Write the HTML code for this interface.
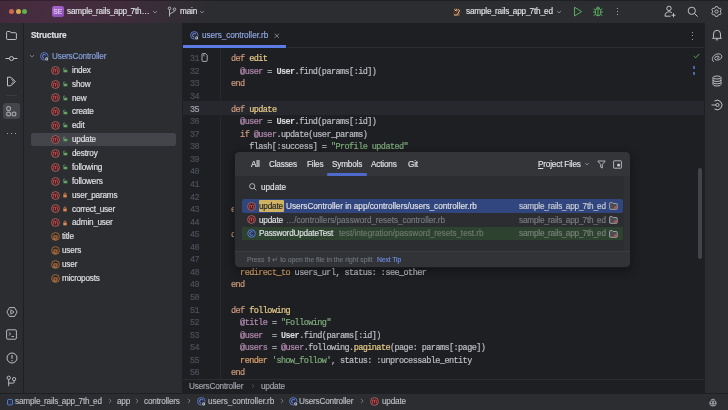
<!DOCTYPE html>
<html><head><meta charset="utf-8">
<style>
*{margin:0;padding:0;box-sizing:border-box}
html,body{width:728px;height:410px;overflow:hidden;background:#1E1F22}
body{position:relative;font-family:"Liberation Sans",sans-serif;font-size:8.2px;color:#DFE1E5}
.a{position:absolute;white-space:pre}
svg{position:absolute;overflow:visible;fill:none}
.c,.ln{position:absolute;white-space:pre;font-family:"Liberation Mono",monospace;font-size:8.5px;letter-spacing:-0.56px;color:#BCBEC4;line-height:12px;height:12px}
.ln{color:#53575F;text-align:right;width:30px}
.c,.ln{-webkit-text-stroke:0.2px currentColor;will-change:transform}
.t{-webkit-text-stroke:0.15px currentColor;will-change:transform}
.kw{color:#CE9A7C}
.rk{color:#D8A26C}
.fn{color:#E6CB88}
.iv{color:#B48BB2}
.cl{color:#D9DBE0;font-weight:bold;-webkit-text-stroke:0.05px currentColor}
.st{color:#7DAA7A}
</style></head><body>
<div class="a" style="left:0px;top:0px;width:728px;height:23px;background:#2B2D30;"></div>
<div class="a" style="left:0px;top:0px;width:728px;height:23px;background:linear-gradient(90deg,#432B3D 0px,#472D41 60px,#402C3C 120px,rgba(43,45,48,0) 215px);"></div>
<div class="a" style="left:0px;top:0px;width:728px;height:0.8px;background:rgba(0,0,0,0.25);"></div>
<div class="a" style="left:8.90px;top:9.20px;width:5.0px;height:5.0px;border-radius:50%;background:#CC6A4C"></div>
<div class="a" style="left:15.80px;top:9.20px;width:5.0px;height:5.0px;border-radius:50%;background:#D6AC48"></div>
<div class="a" style="left:22.40px;top:9.20px;width:5.0px;height:5.0px;border-radius:50%;background:#5FAF50"></div>
<div class="a" style="left:52.3px;top:5.6px;width:11.6px;height:11.4px;border-radius:2.5px;background:linear-gradient(160deg,#A865CC,#8A4DB6);color:#F3ECF8;font-size:6.8px;text-align:center;line-height:11.4px;letter-spacing:0px;will-change:transform">SE</div>
<div class="a t" style="left:66.5px;top:6.06px;line-height:11px;height:11px;color:#DFE1E5;font-size:8.2px;letter-spacing:-0.18px;">sample<span style="letter-spacing:-0.9px">_</span>rails<span style="letter-spacing:-0.9px">_</span>app<span style="letter-spacing:-0.9px">_</span>7th…</div>
<svg style="left:150.5px;top:7.800000000000001px;" width="8" height="8" viewBox="0 0 8 8"><path d="M2.1 3.05 L4 4.95 L5.9 3.05" stroke="#9DA0A8" stroke-width="0.8"/></svg>
<svg style="left:167px;top:6px;" width="10" height="11" viewBox="0 0 10 11"><circle cx="2.5" cy="2.3" r="1.3" stroke="#CED0D6" stroke-width="0.8"/><circle cx="7.5" cy="3.3" r="1.3" stroke="#CED0D6" stroke-width="0.8"/><path d="M2.5 3.6 V10.5 M7.5 4.6 C7.5 7 2.5 6.5 2.5 8.8" stroke="#CED0D6" stroke-width="0.8"/></svg>
<div class="a t" style="left:180px;top:6.06px;line-height:11px;height:11px;color:#DFE1E5;font-size:8.2px;letter-spacing:-0.18px;">main</div>
<svg style="left:198px;top:7.800000000000001px;" width="8" height="8" viewBox="0 0 8 8"><path d="M2.1 3.05 L4 4.95 L5.9 3.05" stroke="#9DA0A8" stroke-width="0.8"/></svg>
<svg style="left:452px;top:6.5px;" width="10" height="10" viewBox="0 0 10 10"><ellipse cx="4.9" cy="5.2" rx="4" ry="4.2" fill="#4A3226"/><path d="M2.6 2.6 L4 4 M4.2 2.2 L5 3.6 M6.2 2.4 L7.2 3.4 M2.3 8 L5.2 8 L7.4 3.8" stroke="#D9BFA2" stroke-width="1" stroke-linecap="round"/><path d="M5.2 8 L7.6 8" stroke="#B08060" stroke-width="0.9"/></svg>
<div class="a t" style="left:465.5px;top:6.06px;line-height:11px;height:11px;color:#DFE1E5;font-size:8.2px;letter-spacing:-0.18px;">sample<span style="letter-spacing:-0.9px">_</span>rails<span style="letter-spacing:-0.9px">_</span>app<span style="letter-spacing:-0.9px">_</span>7th<span style="letter-spacing:-0.9px">_</span>ed</div>
<svg style="left:554.5px;top:7.800000000000001px;" width="8" height="8" viewBox="0 0 8 8"><path d="M2.1 3.05 L4 4.95 L5.9 3.05" stroke="#9DA0A8" stroke-width="0.8"/></svg>
<svg style="left:573px;top:6px;" width="10" height="11" viewBox="0 0 10 11"><path d="M1.5 1.2 L8.6 5.6 L1.5 10 Z" stroke="#5FB865" stroke-width="0.9" stroke-linejoin="round"/></svg>
<svg style="left:592px;top:5px;" width="12" height="13" viewBox="0 0 12 13"><path d="M3.4 5.6 Q3.4 3.6 6 3.6 Q8.6 3.6 8.6 5.6 V8.2 Q8.6 10.8 6 10.8 Q3.4 10.8 3.4 8.2 Z" stroke="#5FB865" stroke-width="0.9"/><path d="M4.5 3.8 Q4.5 2 6 2 Q7.5 2 7.5 3.8" stroke="#5FB865" stroke-width="0.9"/><path d="M6 4 V10.5 M3.3 7 H1 M8.7 7 H11 M3.5 5 L1.6 3.8 M8.5 5 L10.4 3.8 M3.6 9.3 L1.6 10.6 M8.4 9.3 L10.4 10.6" stroke="#5FB865" stroke-width="0.9"/></svg>
<div class="a" style="left:616.85px;top:7.95px;width:1.3px;height:1.3px;border-radius:50%;background:#CED0D6"></div>
<div class="a" style="left:616.85px;top:11.05px;width:1.3px;height:1.3px;border-radius:50%;background:#CED0D6"></div>
<div class="a" style="left:616.85px;top:14.15px;width:1.3px;height:1.3px;border-radius:50%;background:#CED0D6"></div>
<svg style="left:664px;top:5px;" width="12" height="13" viewBox="0 0 12 13"><circle cx="5" cy="3.4" r="2.2" stroke="#CED0D6" stroke-width="0.9"/><path d="M1 11.2 C1 8 2.8 6.8 5 6.8 C6.3 6.8 7.2 7.1 7.9 7.7" stroke="#CED0D6" stroke-width="0.9"/><path d="M9.5 8.2 V12.2 M7.5 10.2 H11.5 M1 11.2 H6.5" stroke="#CED0D6" stroke-width="0.9"/></svg>
<svg style="left:687px;top:6px;" width="12" height="12" viewBox="0 0 12 12"><circle cx="4.8" cy="4.8" r="3.6" stroke="#CED0D6" stroke-width="0.9"/><path d="M7.4 7.4 L10.6 10.6" stroke="#CED0D6" stroke-width="0.95"/></svg>
<svg style="left:711.1px;top:5.9px;" width="11" height="11" viewBox="0 0 11 11"><path d="M4.55 0.59 L6.45 0.59 L6.87 1.74 L8.07 2.44 L9.27 2.22 L10.23 3.87 L9.44 4.81 L9.44 6.19 L10.23 7.13 L9.27 8.78 L8.07 8.56 L6.87 9.26 L6.45 10.41 L4.55 10.41 L4.13 9.26 L2.93 8.56 L1.73 8.78 L0.77 7.13 L1.56 6.19 L1.56 4.81 L0.77 3.87 L1.73 2.22 L2.93 2.44 L4.13 1.74 Z" stroke="#CED0D6" stroke-width="0.85" stroke-linejoin="round"/><circle cx="5.5" cy="5.5" r="1.6" stroke="#CED0D6" stroke-width="0.85"/></svg>
<div class="a" style="left:0px;top:22.6px;width:728px;height:0.5px;background:rgba(30,31,34,0.6);"></div>
<div class="a" style="left:0px;top:23px;width:23px;height:370px;background:#2B2D30;"></div>
<div class="a" style="left:23px;top:23px;width:0.8px;height:370px;background:#1E1F22;"></div>
<svg style="left:6px;top:31px;" width="11" height="9" viewBox="0 0 11 9"><path d="M0.6 1.4 Q0.6 0.5 1.5 0.5 H3.9 L5.1 1.7 H9.5 Q10.4 1.7 10.4 2.6 V7.6 Q10.4 8.5 9.5 8.5 H1.5 Q0.6 8.5 0.6 7.6 Z" stroke="#CED0D6" stroke-width="0.9" stroke-linejoin="round"/></svg>
<svg style="left:5px;top:54px;" width="13" height="9" viewBox="0 0 13 9"><circle cx="6.5" cy="4.5" r="2" stroke="#CED0D6" stroke-width="0.9"/><path d="M0.5 4.5 H4.5 M8.5 4.5 H12.5" stroke="#CED0D6" stroke-width="0.9"/></svg>
<svg style="left:6px;top:76px;" width="11" height="11" viewBox="0 0 11 11"><path d="M1.5 1.2 H4 Q5 1.2 5.8 2 L9.3 5.5 L5.8 9 Q5 9.8 4 9.8 H1.5 Z" stroke="#CED0D6" stroke-width="0.9" stroke-linejoin="round"/><path d="M5.5 3.2 L7.8 5.5 L5.5 7.8" stroke="#CED0D6" stroke-width="0.8"/></svg>
<div class="a" style="left:6px;top:94.6px;width:11px;height:0.7px;background:#393B40;"></div>
<div class="a" style="left:3px;top:103px;width:17px;height:16px;background:#43454A;border-radius:3px;"></div>
<svg style="left:6px;top:106px;" width="11" height="11" viewBox="0 0 11 11"><rect x="0.8" y="0.8" width="3.6" height="3.6" rx="0.6" stroke="#CED0D6" stroke-width="0.85"/><rect x="0.8" y="6.2" width="3.6" height="3.6" rx="0.6" stroke="#CED0D6" stroke-width="0.85"/><rect x="6.2" y="6.2" width="3.6" height="3.6" rx="0.6" stroke="#CED0D6" stroke-width="0.85"/></svg>
<div class="a" style="left:6.85px;top:133.15px;width:1.3px;height:1.3px;border-radius:50%;background:#CED0D6"></div>
<div class="a" style="left:10.85px;top:133.15px;width:1.3px;height:1.3px;border-radius:50%;background:#CED0D6"></div>
<div class="a" style="left:14.85px;top:133.15px;width:1.3px;height:1.3px;border-radius:50%;background:#CED0D6"></div>
<svg style="left:6px;top:306px;" width="12" height="12" viewBox="0 0 12 12"><path d="M0.9 6 L3.4 1.6 H8.6 L11.1 6 L8.6 10.4 H3.4 Z" stroke="#CED0D6" stroke-width="0.85" stroke-linejoin="round"/><path d="M4.8 3.8 L8 6 L4.8 8.2 Z" stroke="#CED0D6" stroke-width="0.8" stroke-linejoin="round"/></svg>
<svg style="left:6px;top:329px;" width="11" height="11" viewBox="0 0 11 11"><rect x="0.6" y="0.8" width="9.8" height="9.4" rx="1.2" stroke="#CED0D6" stroke-width="0.85"/><path d="M2.8 3.5 L4.6 5 L2.8 6.5 M5.5 7.5 H8" stroke="#CED0D6" stroke-width="0.8"/></svg>
<svg style="left:6px;top:352px;" width="12" height="12" viewBox="0 0 12 12"><circle cx="6" cy="6" r="5" stroke="#CED0D6" stroke-width="0.9"/><path d="M6 3 V6.8" stroke="#CED0D6" stroke-width="1"/><circle cx="6" cy="8.7" r="0.6" fill="#CED0D6"/></svg>
<svg style="left:5px;top:374px;" width="13" height="14" viewBox="0 0 13 14"><circle cx="3.7" cy="3.8" r="1.65" stroke="#CED0D6" stroke-width="0.85"/><circle cx="9.1" cy="5.1" r="1.65" stroke="#CED0D6" stroke-width="0.85"/><path d="M3.7 5.45 V12.2 M9.1 6.75 V8.2 Q9.1 9.1 8.2 9.1 H3.7" stroke="#CED0D6" stroke-width="0.85"/></svg>
<div class="a" style="left:23.8px;top:23px;width:158.4px;height:370px;background:#2B2D30;"></div>
<div class="a" style="left:182px;top:23px;width:0.8px;height:370px;background:#1E1F22;"></div>
<div class="a t" style="left:31px;top:30.06px;line-height:11px;height:11px;color:#DFE1E5;font-size:8.2px;letter-spacing:-0.1px;font-weight:bold;">Structure</div>
<svg style="left:28.4px;top:51.9px;" width="8" height="8" viewBox="0 0 8 8"><path d="M2.0 3.0 L4 5.0 L6.0 3.0" stroke="#8C8F96" stroke-width="0.8"/></svg>
<svg style="left:40px;top:51.800000000000004px;" width="10" height="10" viewBox="0 0 10 10"><circle cx="4.3" cy="4.3" r="3.75" fill="#242B45" stroke="#6F87DA" stroke-width="0.8"/><path d="M5.9 3.1 Q5.3 2.5 4.3 2.5 Q2.6 2.5 2.6 4.3 Q2.6 6.1 4.3 6.1" stroke="#8FA3EA" stroke-width="0.8"/><circle cx="6.7" cy="6.9" r="2.2" fill="#2B2D30"/><circle cx="6.7" cy="6.9" r="1.55" fill="#C2C6CC"/><circle cx="6.7" cy="6.9" r="0.55" fill="#2B2D30"/></svg>
<div class="a t" style="left:51.8px;top:50.96px;line-height:11px;height:11px;color:#88A2DE;font-size:8.2px;letter-spacing:-0.18px;">UsersController</div>
<div class="a" style="left:30.5px;top:132.57px;width:145px;height:13.5px;background:#43454A;border-radius:2.5px;"></div>
<svg style="left:51.4px;top:65.67px;" width="9" height="9" viewBox="0 0 9 9"><circle cx="4.5" cy="4.5" r="3.9" fill="#461B20" stroke="#C97C78" stroke-width="0.7"/><path d="M2.6 6.5 V3 M2.6 3.9 Q2.75 2.95 3.55 2.95 Q4.5 2.95 4.5 3.9 V6.5 M4.5 3.9 Q4.65 2.95 5.45 2.95 Q6.4 2.95 6.4 3.9 V6.5" stroke="#D95B56" stroke-width="0.72"/></svg>
<svg style="left:61.599999999999994px;top:66.97px;" width="6" height="6" viewBox="0 0 6 6"><path d="M1.4 2.9 V1.9 Q1.4 0.9 2.3 0.9 Q3 0.9 3.2 1.6" stroke="#64A464" stroke-width="0.7"/><rect x="1.5" y="2.7" width="3.8" height="2.6" fill="#64A464"/></svg>
<div class="a t" style="left:71.9px;top:64.83px;line-height:11px;height:11px;color:#DFE1E5;font-size:8.2px;letter-spacing:-0.18px;">index</div>
<svg style="left:51.4px;top:79.54px;" width="9" height="9" viewBox="0 0 9 9"><circle cx="4.5" cy="4.5" r="3.9" fill="#461B20" stroke="#C97C78" stroke-width="0.7"/><path d="M2.6 6.5 V3 M2.6 3.9 Q2.75 2.95 3.55 2.95 Q4.5 2.95 4.5 3.9 V6.5 M4.5 3.9 Q4.65 2.95 5.45 2.95 Q6.4 2.95 6.4 3.9 V6.5" stroke="#D95B56" stroke-width="0.72"/></svg>
<svg style="left:61.599999999999994px;top:80.84px;" width="6" height="6" viewBox="0 0 6 6"><path d="M1.4 2.9 V1.9 Q1.4 0.9 2.3 0.9 Q3 0.9 3.2 1.6" stroke="#64A464" stroke-width="0.7"/><rect x="1.5" y="2.7" width="3.8" height="2.6" fill="#64A464"/></svg>
<div class="a t" style="left:71.9px;top:78.70px;line-height:11px;height:11px;color:#DFE1E5;font-size:8.2px;letter-spacing:-0.18px;">show</div>
<svg style="left:51.4px;top:93.41000000000001px;" width="9" height="9" viewBox="0 0 9 9"><circle cx="4.5" cy="4.5" r="3.9" fill="#461B20" stroke="#C97C78" stroke-width="0.7"/><path d="M2.6 6.5 V3 M2.6 3.9 Q2.75 2.95 3.55 2.95 Q4.5 2.95 4.5 3.9 V6.5 M4.5 3.9 Q4.65 2.95 5.45 2.95 Q6.4 2.95 6.4 3.9 V6.5" stroke="#D95B56" stroke-width="0.72"/></svg>
<svg style="left:61.599999999999994px;top:94.71000000000001px;" width="6" height="6" viewBox="0 0 6 6"><path d="M1.4 2.9 V1.9 Q1.4 0.9 2.3 0.9 Q3 0.9 3.2 1.6" stroke="#64A464" stroke-width="0.7"/><rect x="1.5" y="2.7" width="3.8" height="2.6" fill="#64A464"/></svg>
<div class="a t" style="left:71.9px;top:92.57px;line-height:11px;height:11px;color:#DFE1E5;font-size:8.2px;letter-spacing:-0.18px;">new</div>
<svg style="left:51.4px;top:107.28px;" width="9" height="9" viewBox="0 0 9 9"><circle cx="4.5" cy="4.5" r="3.9" fill="#461B20" stroke="#C97C78" stroke-width="0.7"/><path d="M2.6 6.5 V3 M2.6 3.9 Q2.75 2.95 3.55 2.95 Q4.5 2.95 4.5 3.9 V6.5 M4.5 3.9 Q4.65 2.95 5.45 2.95 Q6.4 2.95 6.4 3.9 V6.5" stroke="#D95B56" stroke-width="0.72"/></svg>
<svg style="left:61.599999999999994px;top:108.58px;" width="6" height="6" viewBox="0 0 6 6"><path d="M1.4 2.9 V1.9 Q1.4 0.9 2.3 0.9 Q3 0.9 3.2 1.6" stroke="#64A464" stroke-width="0.7"/><rect x="1.5" y="2.7" width="3.8" height="2.6" fill="#64A464"/></svg>
<div class="a t" style="left:71.9px;top:106.44px;line-height:11px;height:11px;color:#DFE1E5;font-size:8.2px;letter-spacing:-0.18px;">create</div>
<svg style="left:51.4px;top:121.14999999999999px;" width="9" height="9" viewBox="0 0 9 9"><circle cx="4.5" cy="4.5" r="3.9" fill="#461B20" stroke="#C97C78" stroke-width="0.7"/><path d="M2.6 6.5 V3 M2.6 3.9 Q2.75 2.95 3.55 2.95 Q4.5 2.95 4.5 3.9 V6.5 M4.5 3.9 Q4.65 2.95 5.45 2.95 Q6.4 2.95 6.4 3.9 V6.5" stroke="#D95B56" stroke-width="0.72"/></svg>
<svg style="left:61.599999999999994px;top:122.44999999999999px;" width="6" height="6" viewBox="0 0 6 6"><path d="M1.4 2.9 V1.9 Q1.4 0.9 2.3 0.9 Q3 0.9 3.2 1.6" stroke="#64A464" stroke-width="0.7"/><rect x="1.5" y="2.7" width="3.8" height="2.6" fill="#64A464"/></svg>
<div class="a t" style="left:71.9px;top:120.31px;line-height:11px;height:11px;color:#DFE1E5;font-size:8.2px;letter-spacing:-0.18px;">edit</div>
<svg style="left:51.4px;top:135.01999999999998px;" width="9" height="9" viewBox="0 0 9 9"><circle cx="4.5" cy="4.5" r="3.9" fill="#461B20" stroke="#C97C78" stroke-width="0.7"/><path d="M2.6 6.5 V3 M2.6 3.9 Q2.75 2.95 3.55 2.95 Q4.5 2.95 4.5 3.9 V6.5 M4.5 3.9 Q4.65 2.95 5.45 2.95 Q6.4 2.95 6.4 3.9 V6.5" stroke="#D95B56" stroke-width="0.72"/></svg>
<svg style="left:61.599999999999994px;top:136.32px;" width="6" height="6" viewBox="0 0 6 6"><path d="M1.4 2.9 V1.9 Q1.4 0.9 2.3 0.9 Q3 0.9 3.2 1.6" stroke="#64A464" stroke-width="0.7"/><rect x="1.5" y="2.7" width="3.8" height="2.6" fill="#64A464"/></svg>
<div class="a t" style="left:71.9px;top:134.18px;line-height:11px;height:11px;color:#DFE1E5;font-size:8.2px;letter-spacing:-0.18px;">update</div>
<svg style="left:51.4px;top:148.89px;" width="9" height="9" viewBox="0 0 9 9"><circle cx="4.5" cy="4.5" r="3.9" fill="#461B20" stroke="#C97C78" stroke-width="0.7"/><path d="M2.6 6.5 V3 M2.6 3.9 Q2.75 2.95 3.55 2.95 Q4.5 2.95 4.5 3.9 V6.5 M4.5 3.9 Q4.65 2.95 5.45 2.95 Q6.4 2.95 6.4 3.9 V6.5" stroke="#D95B56" stroke-width="0.72"/></svg>
<svg style="left:61.599999999999994px;top:150.19px;" width="6" height="6" viewBox="0 0 6 6"><path d="M1.4 2.9 V1.9 Q1.4 0.9 2.3 0.9 Q3 0.9 3.2 1.6" stroke="#64A464" stroke-width="0.7"/><rect x="1.5" y="2.7" width="3.8" height="2.6" fill="#64A464"/></svg>
<div class="a t" style="left:71.9px;top:148.05px;line-height:11px;height:11px;color:#DFE1E5;font-size:8.2px;letter-spacing:-0.18px;">destroy</div>
<svg style="left:51.4px;top:162.76px;" width="9" height="9" viewBox="0 0 9 9"><circle cx="4.5" cy="4.5" r="3.9" fill="#461B20" stroke="#C97C78" stroke-width="0.7"/><path d="M2.6 6.5 V3 M2.6 3.9 Q2.75 2.95 3.55 2.95 Q4.5 2.95 4.5 3.9 V6.5 M4.5 3.9 Q4.65 2.95 5.45 2.95 Q6.4 2.95 6.4 3.9 V6.5" stroke="#D95B56" stroke-width="0.72"/></svg>
<svg style="left:61.599999999999994px;top:164.06px;" width="6" height="6" viewBox="0 0 6 6"><path d="M1.4 2.9 V1.9 Q1.4 0.9 2.3 0.9 Q3 0.9 3.2 1.6" stroke="#64A464" stroke-width="0.7"/><rect x="1.5" y="2.7" width="3.8" height="2.6" fill="#64A464"/></svg>
<div class="a t" style="left:71.9px;top:161.92px;line-height:11px;height:11px;color:#DFE1E5;font-size:8.2px;letter-spacing:-0.18px;">following</div>
<svg style="left:51.4px;top:176.63px;" width="9" height="9" viewBox="0 0 9 9"><circle cx="4.5" cy="4.5" r="3.9" fill="#461B20" stroke="#C97C78" stroke-width="0.7"/><path d="M2.6 6.5 V3 M2.6 3.9 Q2.75 2.95 3.55 2.95 Q4.5 2.95 4.5 3.9 V6.5 M4.5 3.9 Q4.65 2.95 5.45 2.95 Q6.4 2.95 6.4 3.9 V6.5" stroke="#D95B56" stroke-width="0.72"/></svg>
<svg style="left:61.599999999999994px;top:177.93px;" width="6" height="6" viewBox="0 0 6 6"><path d="M1.4 2.9 V1.9 Q1.4 0.9 2.3 0.9 Q3 0.9 3.2 1.6" stroke="#64A464" stroke-width="0.7"/><rect x="1.5" y="2.7" width="3.8" height="2.6" fill="#64A464"/></svg>
<div class="a t" style="left:71.9px;top:175.79px;line-height:11px;height:11px;color:#DFE1E5;font-size:8.2px;letter-spacing:-0.18px;">followers</div>
<svg style="left:51.4px;top:190.49999999999997px;" width="9" height="9" viewBox="0 0 9 9"><circle cx="4.5" cy="4.5" r="3.9" fill="#461B20" stroke="#C97C78" stroke-width="0.7"/><path d="M2.6 6.5 V3 M2.6 3.9 Q2.75 2.95 3.55 2.95 Q4.5 2.95 4.5 3.9 V6.5 M4.5 3.9 Q4.65 2.95 5.45 2.95 Q6.4 2.95 6.4 3.9 V6.5" stroke="#D95B56" stroke-width="0.72"/></svg>
<svg style="left:61.8px;top:191.79999999999998px;" width="6" height="6" viewBox="0 0 6 6"><path d="M2 2.9 V1.9 Q2 0.9 3 0.9 Q4 0.9 4 1.9 V2.9" stroke="#E08855" stroke-width="0.7"/><rect x="1.3" y="2.7" width="3.4" height="2.7" fill="#E08855"/></svg>
<div class="a t" style="left:71.9px;top:189.66px;line-height:11px;height:11px;color:#DFE1E5;font-size:8.2px;letter-spacing:-0.18px;">user<span style="letter-spacing:-0.6px">_</span>params</div>
<svg style="left:51.4px;top:204.36999999999998px;" width="9" height="9" viewBox="0 0 9 9"><circle cx="4.5" cy="4.5" r="3.9" fill="#461B20" stroke="#C97C78" stroke-width="0.7"/><path d="M2.6 6.5 V3 M2.6 3.9 Q2.75 2.95 3.55 2.95 Q4.5 2.95 4.5 3.9 V6.5 M4.5 3.9 Q4.65 2.95 5.45 2.95 Q6.4 2.95 6.4 3.9 V6.5" stroke="#D95B56" stroke-width="0.72"/></svg>
<svg style="left:61.8px;top:205.67px;" width="6" height="6" viewBox="0 0 6 6"><path d="M2 2.9 V1.9 Q2 0.9 3 0.9 Q4 0.9 4 1.9 V2.9" stroke="#E08855" stroke-width="0.7"/><rect x="1.3" y="2.7" width="3.4" height="2.7" fill="#E08855"/></svg>
<div class="a t" style="left:71.9px;top:203.53px;line-height:11px;height:11px;color:#DFE1E5;font-size:8.2px;letter-spacing:-0.18px;">correct<span style="letter-spacing:-0.6px">_</span>user</div>
<svg style="left:51.4px;top:218.23999999999998px;" width="9" height="9" viewBox="0 0 9 9"><circle cx="4.5" cy="4.5" r="3.9" fill="#461B20" stroke="#C97C78" stroke-width="0.7"/><path d="M2.6 6.5 V3 M2.6 3.9 Q2.75 2.95 3.55 2.95 Q4.5 2.95 4.5 3.9 V6.5 M4.5 3.9 Q4.65 2.95 5.45 2.95 Q6.4 2.95 6.4 3.9 V6.5" stroke="#D95B56" stroke-width="0.72"/></svg>
<svg style="left:61.8px;top:219.54px;" width="6" height="6" viewBox="0 0 6 6"><path d="M2 2.9 V1.9 Q2 0.9 3 0.9 Q4 0.9 4 1.9 V2.9" stroke="#E08855" stroke-width="0.7"/><rect x="1.3" y="2.7" width="3.4" height="2.7" fill="#E08855"/></svg>
<div class="a t" style="left:71.9px;top:217.40px;line-height:11px;height:11px;color:#DFE1E5;font-size:8.2px;letter-spacing:-0.18px;">admin<span style="letter-spacing:-0.6px">_</span>user</div>
<svg style="left:51.1px;top:232.10999999999999px;" width="9" height="9" viewBox="0 0 9 9"><circle cx="4.5" cy="4.5" r="3.9" fill="#35281F" stroke="#C4834F" stroke-width="0.7"/><text x="4.45" y="6.55" font-size="5.6" text-anchor="middle" fill="#E0995E" font-family="Liberation Sans">@</text></svg>
<div class="a t" style="left:62.2px;top:231.27px;line-height:11px;height:11px;color:#DFE1E5;font-size:8.2px;letter-spacing:-0.18px;">title</div>
<svg style="left:51.1px;top:245.97999999999996px;" width="9" height="9" viewBox="0 0 9 9"><circle cx="4.5" cy="4.5" r="3.9" fill="#35281F" stroke="#C4834F" stroke-width="0.7"/><text x="4.45" y="6.55" font-size="5.6" text-anchor="middle" fill="#E0995E" font-family="Liberation Sans">@</text></svg>
<div class="a t" style="left:62.2px;top:245.14px;line-height:11px;height:11px;color:#DFE1E5;font-size:8.2px;letter-spacing:-0.18px;">users</div>
<svg style="left:51.1px;top:259.84999999999997px;" width="9" height="9" viewBox="0 0 9 9"><circle cx="4.5" cy="4.5" r="3.9" fill="#35281F" stroke="#C4834F" stroke-width="0.7"/><text x="4.45" y="6.55" font-size="5.6" text-anchor="middle" fill="#E0995E" font-family="Liberation Sans">@</text></svg>
<div class="a t" style="left:62.2px;top:259.01px;line-height:11px;height:11px;color:#DFE1E5;font-size:8.2px;letter-spacing:-0.18px;">user</div>
<svg style="left:51.1px;top:273.71999999999997px;" width="9" height="9" viewBox="0 0 9 9"><circle cx="4.5" cy="4.5" r="3.9" fill="#35281F" stroke="#C4834F" stroke-width="0.7"/><text x="4.45" y="6.55" font-size="5.6" text-anchor="middle" fill="#E0995E" font-family="Liberation Sans">@</text></svg>
<div class="a t" style="left:62.2px;top:272.88px;line-height:11px;height:11px;color:#DFE1E5;font-size:8.2px;letter-spacing:-0.18px;">microposts</div>
<div class="a" style="left:182.8px;top:23px;width:521.5px;height:370px;background:#1E1F22;"></div>
<svg style="left:190px;top:31.4px;" width="10" height="10" viewBox="0 0 10 10"><circle cx="4.3" cy="4.3" r="3.75" fill="#242B45" stroke="#6F87DA" stroke-width="0.8"/><path d="M5.9 3.1 Q5.3 2.5 4.3 2.5 Q2.6 2.5 2.6 4.3 Q2.6 6.1 4.3 6.1" stroke="#8FA3EA" stroke-width="0.8"/><circle cx="6.7" cy="6.9" r="2.2" fill="#1E1F22"/><circle cx="6.7" cy="6.9" r="1.55" fill="#C2C6CC"/><circle cx="6.7" cy="6.9" r="0.55" fill="#1E1F22"/></svg>
<div class="a t" style="left:201.6px;top:30.06px;line-height:11px;height:11px;color:#93A9E6;font-size:8.2px;letter-spacing:-0.05px;">users<span style="letter-spacing:-0.2px">_</span>controller.rb</div>
<svg style="left:274.3px;top:33px;" width="6" height="6" viewBox="0 0 6 6"><path d="M0.7 0.7 L4.9 4.9 M4.9 0.7 L0.7 4.9" stroke="#9A9DA4" stroke-width="0.8"/></svg>
<div class="a" style="left:182.8px;top:44.7px;width:103.6px;height:3.0px;background:#5A7CE4;"></div>
<div class="a" style="left:287px;top:47.2px;width:417.3px;height:0.8px;background:#2B2D30;"></div>
<div class="a" style="left:691.80px;top:32.10px;width:1.2px;height:1.2px;border-radius:50%;background:#CED0D6"></div>
<div class="a" style="left:691.80px;top:35.30px;width:1.2px;height:1.2px;border-radius:50%;background:#CED0D6"></div>
<div class="a" style="left:691.80px;top:38.50px;width:1.2px;height:1.2px;border-radius:50%;background:#CED0D6"></div>
<div class="a" style="left:182.8px;top:101.48px;width:521.5px;height:13.4px;background:#26282E;"></div>
<div class="a" style="left:219.7px;top:48px;width:0.8px;height:331px;background:#27292C;"></div>
<div class="ln" style="left:169px;top:53.23px;color:#4B5059">31</div>
<div class="c" style="left:230.8px;top:53.23px"><span class="kw">def </span><span class="fn">edit</span></div>
<div class="ln" style="left:169px;top:65.80px;color:#4B5059">32</div>
<div class="c" style="left:230.8px;top:65.80px">  <span class="iv">@user</span> = <span class="cl">User</span>.find(params[:id])</div>
<div class="ln" style="left:169px;top:78.37px;color:#4B5059">33</div>
<div class="c" style="left:230.8px;top:78.37px"><span class="kw">end</span></div>
<div class="ln" style="left:169px;top:90.94px;color:#4B5059">34</div>
<div class="ln" style="left:169px;top:103.51px;color:#A1A3AB">35</div>
<div class="c" style="left:230.8px;top:103.51px"><span class="kw">def </span><span class="fn">update</span></div>
<div class="ln" style="left:169px;top:116.08px;color:#4B5059">36</div>
<div class="c" style="left:230.8px;top:116.08px">  <span class="iv">@user</span> = <span class="cl">User</span>.find(params[:id])</div>
<div class="ln" style="left:169px;top:128.65px;color:#4B5059">37</div>
<div class="c" style="left:230.8px;top:128.65px">  <span class="kw">if </span><span class="iv">@user</span>.update(user_params)</div>
<div class="ln" style="left:169px;top:141.22px;color:#4B5059">38</div>
<div class="c" style="left:230.8px;top:141.22px">    flash[:success] = <span class="st">&quot;Profile updated&quot;</span></div>
<div class="ln" style="left:169px;top:153.79px;color:#4B5059">39</div>
<div class="c" style="left:230.8px;top:153.79px">    <span class="rk">redirect_to </span><span class="iv">@user</span></div>
<div class="ln" style="left:169px;top:166.36px;color:#4B5059">40</div>
<div class="c" style="left:230.8px;top:166.36px">  <span class="kw">else</span></div>
<div class="ln" style="left:169px;top:178.93px;color:#4B5059">41</div>
<div class="c" style="left:230.8px;top:178.93px">    <span class="rk">render </span><span class="st">&#x27;edit&#x27;</span>, status: :unprocessable_entity</div>
<div class="ln" style="left:169px;top:191.50px;color:#4B5059">42</div>
<div class="c" style="left:230.8px;top:191.50px">  <span class="kw">end</span></div>
<div class="ln" style="left:169px;top:204.07px;color:#4B5059">43</div>
<div class="c" style="left:230.8px;top:204.07px"><span class="kw">end</span></div>
<div class="ln" style="left:169px;top:216.64px;color:#4B5059">44</div>
<div class="ln" style="left:169px;top:229.21px;color:#4B5059">45</div>
<div class="c" style="left:230.8px;top:229.21px"><span class="kw">def </span><span class="fn">destroy</span></div>
<div class="ln" style="left:169px;top:241.78px;color:#4B5059">46</div>
<div class="c" style="left:230.8px;top:241.78px">  <span class="cl">User</span>.find(params[:id]).destroy</div>
<div class="ln" style="left:169px;top:254.35px;color:#4B5059">47</div>
<div class="c" style="left:230.8px;top:254.35px">  flash[:success] = <span class="st">&quot;User deleted&quot;</span></div>
<div class="ln" style="left:169px;top:266.92px;color:#4B5059">48</div>
<div class="c" style="left:230.8px;top:266.92px">  <span class="rk">redirect_to</span> users_url, status: :see_other</div>
<div class="ln" style="left:169px;top:279.49px;color:#4B5059">49</div>
<div class="c" style="left:230.8px;top:279.49px"><span class="kw">end</span></div>
<div class="ln" style="left:169px;top:292.06px;color:#4B5059">50</div>
<div class="ln" style="left:169px;top:304.63px;color:#4B5059">51</div>
<div class="c" style="left:230.8px;top:304.63px"><span class="kw">def </span><span class="fn">following</span></div>
<div class="ln" style="left:169px;top:317.20px;color:#4B5059">52</div>
<div class="c" style="left:230.8px;top:317.20px">  <span class="iv">@title</span> = <span class="st">&quot;Following&quot;</span></div>
<div class="ln" style="left:169px;top:329.77px;color:#4B5059">53</div>
<div class="c" style="left:230.8px;top:329.77px">  <span class="iv">@user</span>  = <span class="cl">User</span>.find(params[:id])</div>
<div class="ln" style="left:169px;top:342.34px;color:#4B5059">54</div>
<div class="c" style="left:230.8px;top:342.34px">  <span class="iv">@users</span> = <span class="iv">@user</span>.following.<span class="fn">paginate</span>(page: params[:page])</div>
<div class="ln" style="left:169px;top:354.91px;color:#4B5059">55</div>
<div class="c" style="left:230.8px;top:354.91px">  <span class="rk">render </span><span class="st">&#x27;show_follow&#x27;</span>, status: :unprocessable_entity</div>
<div class="ln" style="left:169px;top:367.48px;color:#4B5059">56</div>
<div class="c" style="left:230.8px;top:367.48px"><span class="kw">end</span></div>
<svg style="left:200.5px;top:53px;" width="7" height="9" viewBox="0 0 7 9"><path d="M1 1.5 Q1 0.6 1.9 0.6 H4.5 L6.2 2.3 V7.6 Q6.2 8.4 5.4 8.4 H1.9 Q1 8.4 1 7.6 Z" stroke="#CED0D6" stroke-width="0.8"/><path d="M2.8 0.8 V3 H3.6" stroke="#CED0D6" stroke-width="0.6"/></svg>
<svg style="left:692.5px;top:52.5px;" width="7" height="6" viewBox="0 0 7 6"><path d="M0.8 3 L2.7 4.8 L6.2 1" stroke="#5FB865" stroke-width="0.9"/></svg>
<div class="a" style="left:693.4px;top:65.6px;width:1.2px;height:3px;background:#4A66A6;"></div>
<div class="a" style="left:693.4px;top:72.4px;width:1.2px;height:3px;background:#4A66A6;"></div>
<div class="a" style="left:698px;top:167.8px;width:4.3px;height:91.4px;background:#424449;border-radius:2.2px;"></div>
<div class="a" style="left:182.8px;top:378.7px;width:521.5px;height:0.8px;background:#2B2D30;"></div>
<div class="a t" style="left:189.2px;top:381.16px;line-height:11px;height:11px;color:#A3A6AC;font-size:8.2px;letter-spacing:-0.18px;">UsersController</div>
<svg style="left:249.2px;top:382.4px;" width="8" height="8" viewBox="0 0 8 8"><path d="M3.1 2.2 L4.9 4 L3.1 5.8" stroke="#54575E" stroke-width="0.8"/></svg>
<div class="a t" style="left:260.8px;top:381.16px;line-height:11px;height:11px;color:#A3A6AC;font-size:8.2px;letter-spacing:-0.18px;">update</div>
<div class="a" style="left:705px;top:23px;width:23px;height:370px;background:#2B2D30;"></div>
<div class="a" style="left:704.3px;top:23px;width:0.8px;height:370px;background:#1E1F22;"></div>
<svg style="left:711px;top:29px;" width="12" height="12" viewBox="0 0 12 12"><path d="M2.5 8.5 V5 Q2.5 1.3 6 1.3 Q9.5 1.3 9.5 5 V8.5 L10.5 9.3 H1.5 Z" stroke="#CED0D6" stroke-width="0.9" stroke-linejoin="round"/><path d="M4.8 10.8 H7.2" stroke="#CED0D6" stroke-width="0.9"/></svg>
<svg style="left:711px;top:52px;" width="12" height="12" viewBox="0 0 12 12"><path d="M3 9.8 C0.5 8.5 0.8 4.5 4.5 2.6 C7.8 1 10.8 2.2 10.8 4.6 C10.8 7 7.5 8.5 5.2 8 C3.2 7.5 3.2 5.6 5 4.6 C6.5 3.8 8.3 4.2 8.2 5.3 C8.1 6.2 6.8 6.5 6 6.1" stroke="#CED0D6" stroke-width="0.85"/></svg>
<svg style="left:711px;top:75px;" width="12" height="12" viewBox="0 0 12 12"><ellipse cx="6" cy="2.5" rx="4" ry="1.5" stroke="#CED0D6" stroke-width="0.85"/><path d="M2 2.5 V9.5 Q2 11 6 11 Q10 11 10 9.5 V2.5 M2 5 Q2 6.5 6 6.5 Q10 6.5 10 5 M2 7.3 Q2 8.8 6 8.8 Q10 8.8 10 7.3" stroke="#CED0D6" stroke-width="0.85"/></svg>
<svg style="left:711px;top:99px;" width="12" height="12" viewBox="0 0 12 12"><path d="M3.5 2 A4.8 4.8 0 1 1 3.5 10" stroke="#CED0D6" stroke-width="0.9"/><circle cx="6.5" cy="6" r="1.6" stroke="#CED0D6" stroke-width="0.85"/><path d="M0.5 6 H4.9" stroke="#CED0D6" stroke-width="0.9"/></svg>
<div class="a" style="left:234.2px;top:151.2px;width:396.6px;height:116.6px;border-radius:5px;background:#1A1B1E;box-shadow:0 3px 10px rgba(0,0,0,0.4)"></div>
<div class="a" style="left:235px;top:152px;width:395px;height:115px;border-radius:4.5px;background:#2B2D30;overflow:hidden"><div class="a" style="left:0;top:0;width:395px;height:23.6px;background:#333539"></div><div class="a" style="left:0;top:23.6px;width:395px;height:0.6px;background:#2A2C2F"></div><div class="a" style="left:0;top:98.8px;width:395px;height:0.7px;background:#3A3C40"></div><div class="a" style="left:0;top:99.5px;width:395px;height:16px;background:#313336"></div><div class="a" style="left:388.5px;top:24.2px;width:7px;height:74.6px;background:#2F3134"></div></div>
<div class="a t" style="left:251.4px;top:159.16px;line-height:11px;height:11px;color:#DFE1E5;font-size:8.2px;letter-spacing:-0.18px;">All</div>
<div class="a t" style="left:269.2px;top:159.16px;line-height:11px;height:11px;color:#DFE1E5;font-size:8.2px;letter-spacing:-0.18px;">Classes</div>
<div class="a t" style="left:306.6px;top:159.16px;line-height:11px;height:11px;color:#DFE1E5;font-size:8.2px;letter-spacing:-0.18px;">Files</div>
<div class="a t" style="left:331.8px;top:159.16px;line-height:11px;height:11px;color:#DFE1E5;font-size:8.2px;letter-spacing:-0.18px;">Symbols</div>
<div class="a t" style="left:371px;top:159.16px;line-height:11px;height:11px;color:#DFE1E5;font-size:8.2px;letter-spacing:-0.18px;">Actions</div>
<div class="a t" style="left:407.5px;top:159.16px;line-height:11px;height:11px;color:#DFE1E5;font-size:8.2px;letter-spacing:-0.18px;">Git</div>
<div class="a" style="left:327.4px;top:173.2px;width:39.8px;height:2.4px;background:#4D69CC;border-radius:1px;"></div>
<div class="a t" style="left:537.8px;top:159.16px;line-height:11px;height:11px;color:#DFE1E5;font-size:8.2px;letter-spacing:-0.18px;"><span style="text-decoration:underline;text-decoration-thickness:0.6px;text-underline-offset:1px">P</span>roject Files</div>
<svg style="left:583px;top:160.3px;" width="8" height="8" viewBox="0 0 8 8"><path d="M2.2 3.1 L4 4.9 L5.8 3.1" stroke="#9DA0A8" stroke-width="0.8"/></svg>
<svg style="left:597px;top:159.5px;" width="9" height="9" viewBox="0 0 9 9"><path d="M0.8 1 H8.2 L5.3 4.6 V8 L3.7 7.2 V4.6 Z" stroke="#CED0D6" stroke-width="0.8" stroke-linejoin="round"/></svg>
<svg style="left:612.5px;top:159.5px;" width="9" height="9" viewBox="0 0 9 9"><rect x="0.6" y="0.8" width="7.8" height="7.4" rx="0.5" stroke="#CED0D6" stroke-width="0.8"/><rect x="4.3" y="3.8" width="2.6" height="2.6" fill="#CED0D6"/></svg>
<svg style="left:248.5px;top:182.6px;" width="8" height="8" viewBox="0 0 8 8"><circle cx="3.2" cy="3.2" r="2.6" stroke="#CED0D6" stroke-width="0.8"/><path d="M5.1 5.1 L7.3 7.3" stroke="#CED0D6" stroke-width="0.8"/></svg>
<div class="a t" style="left:261.3px;top:181.76px;line-height:11px;height:11px;color:#DFE1E5;font-size:8.2px;letter-spacing:0px;">update</div>
<div class="a" style="left:242px;top:199.3px;width:381px;height:13.7px;background:#31467E;border-radius:2px;"></div>
<div class="a" style="left:242px;top:226.70000000000002px;width:381px;height:13.7px;background:#2D422F;"></div>
<svg style="left:246.7px;top:201.65px;" width="9" height="9" viewBox="0 0 9 9"><circle cx="4.5" cy="4.5" r="3.9" fill="#461B20" stroke="#C97C78" stroke-width="0.7"/><path d="M2.6 6.5 V3 M2.6 3.9 Q2.75 2.95 3.55 2.95 Q4.5 2.95 4.5 3.9 V6.5 M4.5 3.9 Q4.65 2.95 5.45 2.95 Q6.4 2.95 6.4 3.9 V6.5" stroke="#D95B56" stroke-width="0.72"/></svg>
<div class="a" style="left:258.6px;top:200.0px;width:25.4px;height:12.2px;background:#CFB263;border-radius:1px;"></div>
<div class="a t" style="left:259px;top:201.01px;line-height:11px;height:11px;color:#1E1F22;font-size:8.2px;letter-spacing:-0.18px;">update</div>
<div class="a t" style="left:285.6px;top:201.01px;line-height:11px;height:11px;color:#DFE1E5;font-size:8.2px;letter-spacing:0.0px;">UsersController in app/controllers/users<span style="letter-spacing:-0.3px">_</span>controller.rb</div>
<div class="a t" style="left:519.4px;top:201.01px;line-height:11px;height:11px;color:#CDD0D6;font-size:8.2px;letter-spacing:-0.18px;">sample<span style="letter-spacing:-0.9px">_</span>rails<span style="letter-spacing:-0.9px">_</span>app<span style="letter-spacing:-0.9px">_</span>7th<span style="letter-spacing:-0.9px">_</span>ed</div>
<svg style="left:609.3px;top:202.15px;" width="9" height="8" viewBox="0 0 9 8"><path d="M0.6 1.3 Q0.6 0.6 1.3 0.6 H3.3 L4.2 1.5 H7.5 Q8.2 1.5 8.2 2.2 V6.6 Q8.2 7.3 7.5 7.3 H1.3 Q0.6 7.3 0.6 6.6 Z" fill="#4A4C52" stroke="#BDC0C6" stroke-width="0.75"/><circle cx="6.4" cy="5.6" r="1.4" fill="#C0504C"/></svg>
<svg style="left:246.7px;top:215.35000000000002px;" width="9" height="9" viewBox="0 0 9 9"><circle cx="4.5" cy="4.5" r="3.9" fill="#461B20" stroke="#C97C78" stroke-width="0.7"/><path d="M2.6 6.5 V3 M2.6 3.9 Q2.75 2.95 3.55 2.95 Q4.5 2.95 4.5 3.9 V6.5 M4.5 3.9 Q4.65 2.95 5.45 2.95 Q6.4 2.95 6.4 3.9 V6.5" stroke="#D95B56" stroke-width="0.72"/></svg>
<div class="a t" style="left:259px;top:214.71px;line-height:11px;height:11px;color:#DFE1E5;font-size:8.2px;letter-spacing:-0.18px;">update</div>
<div class="a t" style="left:286px;top:214.71px;line-height:11px;height:11px;color:#787B82;font-size:8.2px;letter-spacing:0.0px;">…/controllers/password<span style="letter-spacing:-0.3px">_</span>resets<span style="letter-spacing:-0.3px">_</span>controller.rb</div>
<div class="a t" style="left:519.4px;top:214.71px;line-height:11px;height:11px;color:#7A7D84;font-size:8.2px;letter-spacing:-0.18px;">sample<span style="letter-spacing:-0.9px">_</span>rails<span style="letter-spacing:-0.9px">_</span>app<span style="letter-spacing:-0.9px">_</span>7th<span style="letter-spacing:-0.9px">_</span>ed</div>
<svg style="left:609.3px;top:215.85000000000002px;" width="9" height="8" viewBox="0 0 9 8"><path d="M0.6 1.3 Q0.6 0.6 1.3 0.6 H3.3 L4.2 1.5 H7.5 Q8.2 1.5 8.2 2.2 V6.6 Q8.2 7.3 7.5 7.3 H1.3 Q0.6 7.3 0.6 6.6 Z" fill="#4A4C52" stroke="#BDC0C6" stroke-width="0.75"/><circle cx="6.4" cy="5.6" r="1.4" fill="#C0504C"/></svg>
<svg style="left:246.7px;top:229.05px;" width="9" height="9" viewBox="0 0 9 9"><circle cx="4.5" cy="4.5" r="3.8" fill="#26324F" stroke="#5E8FF0" stroke-width="0.8"/><path d="M5.8 3.2 A1.8 1.8 0 1 0 5.8 5.8" stroke="#8FB0F8" stroke-width="0.75"/></svg>
<div class="a t" style="left:259px;top:228.41px;line-height:11px;height:11px;color:#DFE1E5;font-size:8.2px;letter-spacing:-0.18px;">PasswordUpdateTest</div>
<div class="a t" style="left:338.5px;top:228.41px;line-height:11px;height:11px;color:#6E7A6E;font-size:8.2px;letter-spacing:0.0px;">test/integration/password<span style="letter-spacing:-0.3px">_</span>resets<span style="letter-spacing:-0.3px">_</span>test.rb</div>
<div class="a t" style="left:519.4px;top:228.41px;line-height:11px;height:11px;color:#7A827A;font-size:8.2px;letter-spacing:-0.18px;">sample<span style="letter-spacing:-0.9px">_</span>rails<span style="letter-spacing:-0.9px">_</span>app<span style="letter-spacing:-0.9px">_</span>7th<span style="letter-spacing:-0.9px">_</span>ed</div>
<svg style="left:609.3px;top:229.55px;" width="9" height="8" viewBox="0 0 9 8"><path d="M0.6 1.3 Q0.6 0.6 1.3 0.6 H3.3 L4.2 1.5 H7.5 Q8.2 1.5 8.2 2.2 V6.6 Q8.2 7.3 7.5 7.3 H1.3 Q0.6 7.3 0.6 6.6 Z" fill="#4A4C52" stroke="#BDC0C6" stroke-width="0.75"/><circle cx="6.4" cy="5.6" r="1.4" fill="#C0504C"/></svg>
<div class="a t" style="left:246.8px;top:255.44px;line-height:9px;height:9px;color:#6F737A;font-size:6.8px;letter-spacing:0.0px;">Press ⇧↵ to open the file in the right split</div>
<div class="a t" style="left:376.7px;top:255.44px;line-height:9px;height:9px;color:#6C8BE0;font-size:6.8px;letter-spacing:-0.1px;">Next Tip</div>
<div class="a" style="left:0px;top:393px;width:728px;height:17px;background:#2B2D30;"></div>
<div class="a" style="left:0px;top:392.6px;width:728px;height:0.8px;background:#1E1F22;"></div>
<svg style="left:7.3px;top:399px;" width="6" height="6.5" viewBox="0 0 6 6.5"><rect x="0.5" y="0.5" width="5" height="5.4" rx="1" fill="#26324F" stroke="#5E8FF0" stroke-width="0.8"/></svg>
<div class="a t" style="left:15.2px;top:395.86px;line-height:11px;height:11px;color:#BCBEC4;font-size:8.2px;letter-spacing:-0.18px;">sample<span style="letter-spacing:-0.9px">_</span>rails<span style="letter-spacing:-0.9px">_</span>app<span style="letter-spacing:-0.9px">_</span>7th<span style="letter-spacing:-0.9px">_</span>ed</div>
<svg style="left:106px;top:397.4px;" width="8" height="8" viewBox="0 0 8 8"><path d="M2.9 1.7999999999999998 L5.1 4 L2.9 6.2" stroke="#8A8D94" stroke-width="0.8"/></svg>
<div class="a t" style="left:116.8px;top:395.86px;line-height:11px;height:11px;color:#BCBEC4;font-size:8.2px;letter-spacing:-0.18px;">app</div>
<svg style="left:132.6px;top:397.4px;" width="8" height="8" viewBox="0 0 8 8"><path d="M2.9 1.7999999999999998 L5.1 4 L2.9 6.2" stroke="#8A8D94" stroke-width="0.8"/></svg>
<div class="a t" style="left:144.2px;top:395.86px;line-height:11px;height:11px;color:#BCBEC4;font-size:8.2px;letter-spacing:-0.18px;">controllers</div>
<svg style="left:185px;top:397.4px;" width="8" height="8" viewBox="0 0 8 8"><path d="M2.9 1.7999999999999998 L5.1 4 L2.9 6.2" stroke="#8A8D94" stroke-width="0.8"/></svg>
<svg style="left:197px;top:396.8px;" width="10" height="10" viewBox="0 0 10 10"><circle cx="4.3" cy="4.3" r="3.75" fill="#242B45" stroke="#6F87DA" stroke-width="0.8"/><path d="M5.9 3.1 Q5.3 2.5 4.3 2.5 Q2.6 2.5 2.6 4.3 Q2.6 6.1 4.3 6.1" stroke="#8FA3EA" stroke-width="0.8"/><circle cx="6.7" cy="6.9" r="2.2" fill="#2B2D30"/><circle cx="6.7" cy="6.9" r="1.55" fill="#C2C6CC"/><circle cx="6.7" cy="6.9" r="0.55" fill="#2B2D30"/></svg>
<div class="a t" style="left:208px;top:395.86px;line-height:11px;height:11px;color:#BCBEC4;font-size:8.2px;letter-spacing:-0.05px;">users<span style="letter-spacing:-0.2px">_</span>controller.rb</div>
<svg style="left:277.6px;top:397.4px;" width="8" height="8" viewBox="0 0 8 8"><path d="M2.9 1.7999999999999998 L5.1 4 L2.9 6.2" stroke="#8A8D94" stroke-width="0.8"/></svg>
<svg style="left:288.8px;top:396.8px;" width="10" height="10" viewBox="0 0 10 10"><circle cx="4.3" cy="4.3" r="3.75" fill="#242B45" stroke="#6F87DA" stroke-width="0.8"/><path d="M5.9 3.1 Q5.3 2.5 4.3 2.5 Q2.6 2.5 2.6 4.3 Q2.6 6.1 4.3 6.1" stroke="#8FA3EA" stroke-width="0.8"/><circle cx="6.7" cy="6.9" r="2.2" fill="#2B2D30"/><circle cx="6.7" cy="6.9" r="1.55" fill="#C2C6CC"/><circle cx="6.7" cy="6.9" r="0.55" fill="#2B2D30"/></svg>
<div class="a t" style="left:299.4px;top:395.86px;line-height:11px;height:11px;color:#BCBEC4;font-size:8.2px;letter-spacing:-0.18px;">UsersController</div>
<svg style="left:358px;top:397.4px;" width="8" height="8" viewBox="0 0 8 8"><path d="M2.9 1.7999999999999998 L5.1 4 L2.9 6.2" stroke="#8A8D94" stroke-width="0.8"/></svg>
<svg style="left:369.7px;top:396.9px;" width="9" height="9" viewBox="0 0 9 9"><circle cx="4.5" cy="4.5" r="3.9" fill="#461B20" stroke="#C97C78" stroke-width="0.7"/><path d="M2.6 6.5 V3 M2.6 3.9 Q2.75 2.95 3.55 2.95 Q4.5 2.95 4.5 3.9 V6.5 M4.5 3.9 Q4.65 2.95 5.45 2.95 Q6.4 2.95 6.4 3.9 V6.5" stroke="#D95B56" stroke-width="0.72"/></svg>
<div class="a t" style="left:381.8px;top:395.86px;line-height:11px;height:11px;color:#BCBEC4;font-size:8.2px;letter-spacing:-0.18px;">update</div>
<svg style="left:709px;top:397.5px;" width="8" height="9" viewBox="0 0 8 9"><path d="M2.2 1.8 Q4 0.6 5.8 1.8" stroke="#BFC2C8" stroke-width="0.8"/><circle cx="2.6" cy="4.3" r="1.5" stroke="#BFC2C8" stroke-width="0.8"/><circle cx="5.4" cy="4.3" r="1.5" stroke="#BFC2C8" stroke-width="0.8"/><path d="M1.1 4.3 Q0.6 6.5 1.6 7.4 Q4 8.6 6.4 7.4 Q7.4 6.5 6.9 4.3 M3 6.9 H5" stroke="#BFC2C8" stroke-width="0.8"/></svg>
</body></html>
